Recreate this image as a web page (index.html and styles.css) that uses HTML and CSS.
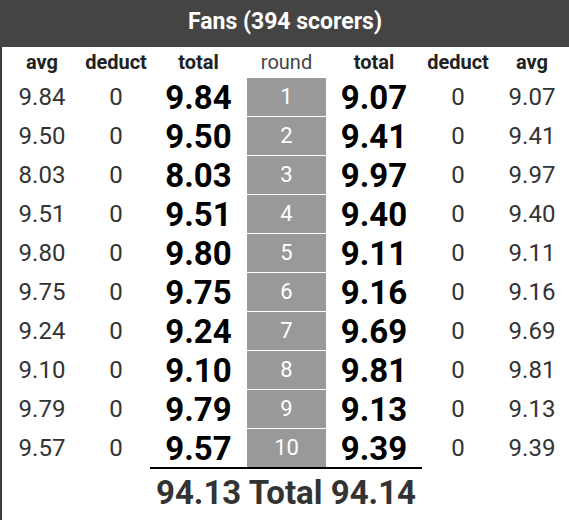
FILE: index.html
```html
<!DOCTYPE html>
<html>
<head>
<meta charset="utf-8">
<link rel="stylesheet" href="styles.css">
</head>
<body>
<div class="panel">
  <div class="title">Fans (394 scorers)</div>
  <div class="grid">
    <div class="hd">avg</div><div class="hd">deduct</div><div class="hd">total</div><div class="hd round-hd">round</div><div class="hd">total</div><div class="hd">deduct</div><div class="hd">avg</div>

    <div class="avg">9.84</div><div class="ded">0</div><div class="tot">9.84</div><div class="rnd">1</div><div class="tot">9.07</div><div class="ded">0</div><div class="avg">9.07</div>
    <div class="avg">9.50</div><div class="ded">0</div><div class="tot">9.50</div><div class="rnd">2</div><div class="tot">9.41</div><div class="ded">0</div><div class="avg">9.41</div>
    <div class="avg">8.03</div><div class="ded">0</div><div class="tot">8.03</div><div class="rnd">3</div><div class="tot">9.97</div><div class="ded">0</div><div class="avg">9.97</div>
    <div class="avg">9.51</div><div class="ded">0</div><div class="tot">9.51</div><div class="rnd">4</div><div class="tot">9.40</div><div class="ded">0</div><div class="avg">9.40</div>
    <div class="avg">9.80</div><div class="ded">0</div><div class="tot">9.80</div><div class="rnd">5</div><div class="tot">9.11</div><div class="ded">0</div><div class="avg">9.11</div>
    <div class="avg">9.75</div><div class="ded">0</div><div class="tot">9.75</div><div class="rnd">6</div><div class="tot">9.16</div><div class="ded">0</div><div class="avg">9.16</div>
    <div class="avg">9.24</div><div class="ded">0</div><div class="tot">9.24</div><div class="rnd">7</div><div class="tot">9.69</div><div class="ded">0</div><div class="avg">9.69</div>
    <div class="avg">9.10</div><div class="ded">0</div><div class="tot">9.10</div><div class="rnd">8</div><div class="tot">9.81</div><div class="ded">0</div><div class="avg">9.81</div>
    <div class="avg">9.79</div><div class="ded">0</div><div class="tot">9.79</div><div class="rnd">9</div><div class="tot">9.13</div><div class="ded">0</div><div class="avg">9.13</div>
    <div class="avg">9.57</div><div class="ded">0</div><div class="tot">9.57</div><div class="rnd">10</div><div class="tot">9.39</div><div class="ded">0</div><div class="avg">9.39</div>

    <div class="sum">94.13 Total 94.14</div>
  </div>
</div>
</body>
</html>
```
FILE: styles.css
```css
html, body {
  margin: 0;
  padding: 0;
  background: #fff;
  overflow: hidden;
}
body {
  font-family: Roboto, "Liberation Sans", sans-serif;
}
.panel {
  width: 570px;
  height: 520px;
  border-left: 2px solid #3c3c3c;
  box-sizing: border-box;
}
.title {
  height: 47px;
  margin-left: -2px;
  background: #444444;
  color: #fff;
  font-weight: bold;
  font-size: 23px;
  line-height: 44px;
  text-align: center;
}
.grid {
  display: grid;
  grid-template-columns: 80px 68px 97px 79px 96px 72px 76px;
  grid-auto-rows: 39px;
  grid-template-rows: 31px;
  text-align: center;
}
.hd {
  font-weight: bold;
  font-size: 20px;
  color: #222;
  line-height: 31px;
}
.round-hd {
  font-weight: normal;
  color: #444;
}
.avg, .ded {
  font-size: 24px;
  color: #333;
  line-height: 39px;
}
.tot {
  font-size: 33px;
  font-weight: bold;
  color: #000;
  line-height: 39px;
}
.rnd {
  background: #999999;
  color: #fff;
  font-size: 22px;
  line-height: 38px;
  height: 38px;
  border-bottom: 1.5px solid #fff;
}
.sum {
  grid-column: 3 / 6;
  height: 48px;
  margin-top: -1px;
  border-top: 2px solid #000;
  font-size: 33px;
  font-weight: bold;
  color: #333;
  line-height: 48px;
  white-space: nowrap;
}
```
